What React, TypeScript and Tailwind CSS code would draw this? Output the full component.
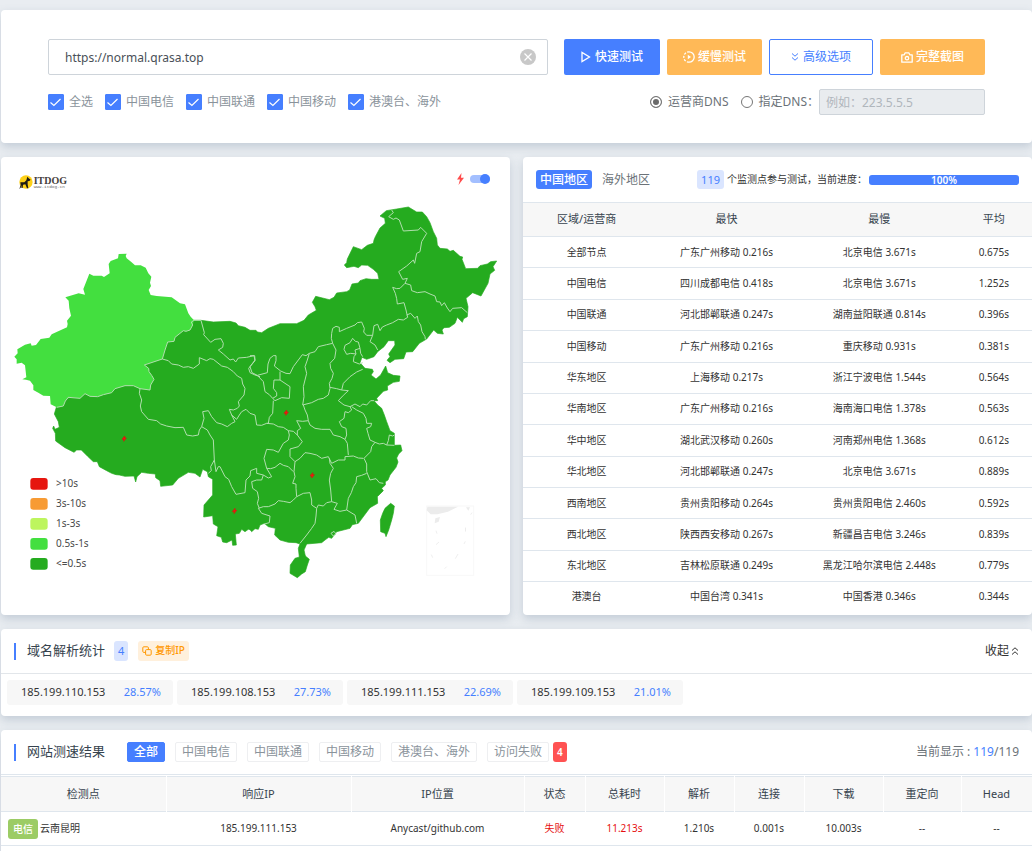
import { useState } from "react";
import clsx from "clsx";

const carriers = ["全选", "中国电信", "中国联通", "中国移动", "港澳台、海外"];

const regions = [
  { name: "全部节点", fast: "广东广州移动 0.216s", slow: "北京电信 3.671s", avg: "0.675s" },
  { name: "中国电信", fast: "四川成都电信 0.418s", slow: "北京电信 3.671s", avg: "1.252s" },
  { name: "中国联通", fast: "河北邯郸联通 0.247s", slow: "湖南益阳联通 0.814s", avg: "0.396s" },
  { name: "中国移动", fast: "广东广州移动 0.216s", slow: "重庆移动 0.931s", avg: "0.381s" },
  { name: "华东地区", fast: "上海移动 0.217s", slow: "浙江宁波电信 1.544s", avg: "0.564s" },
  { name: "华南地区", fast: "广东广州移动 0.216s", slow: "海南海口电信 1.378s", avg: "0.563s" },
  { name: "华中地区", fast: "湖北武汉移动 0.260s", slow: "河南郑州电信 1.368s", avg: "0.612s" },
  { name: "华北地区", fast: "河北邯郸联通 0.247s", slow: "北京电信 3.671s", avg: "0.889s" },
  { name: "西南地区", fast: "贵州贵阳移动 0.264s", slow: "贵州贵阳电信 2.460s", avg: "0.592s" },
  { name: "西北地区", fast: "陕西西安移动 0.267s", slow: "新疆昌吉电信 3.246s", avg: "0.839s" },
  { name: "东北地区", fast: "吉林松原联通 0.249s", slow: "黑龙江哈尔滨电信 2.448s", avg: "0.779s" },
  { name: "港澳台", fast: "中国台湾 0.341s", slow: "中国香港 0.346s", avg: "0.344s" },
];

const ips = [
  { ip: "185.199.110.153", rate: "28.57%" },
  { ip: "185.199.108.153", rate: "27.73%" },
  { ip: "185.199.111.153", rate: "22.69%" },
  { ip: "185.199.109.153", rate: "21.01%" },
];

const filters = ["全部", "中国电信", "中国联通", "中国移动", "港澳台、海外", "访问失败"];

const columns = [
  { label: "检测点", width: "w-[165px]" },
  { label: "响应IP", width: "w-[185px]" },
  { label: "IP位置", width: "w-[173px]" },
  { label: "状态", width: "w-[61px]" },
  { label: "总耗时", width: "w-[79px]" },
  { label: "解析", width: "w-[70px]" },
  { label: "连接", width: "w-[70px]" },
  { label: "下载", width: "w-[79px]" },
  { label: "重定向", width: "w-[78px]" },
  { label: "Head", width: "w-[71px]" },
];

const legend = [
  { label: ">10s", color: "#e6160f" },
  { label: "3s-10s", color: "#f79b34" },
  { label: "1s-3s", color: "#bdf55e" },
  { label: "0.5s-1s", color: "#43df3f" },
  { label: "<=0.5s", color: "#25ab1f" },
];

const mainland =
  "582,961 603,961 640,966 690,964 708,969 715,977 735,982 750,991 768,991 772,996 785,998 805,985 840,971 890,971 912,961 925,945 949,931 945,920 937,907 947,889 988,899 1002,892 1010,879 1040,875 1049,870 1056,852 1075,849 1080,842 1098,836 1115,838 1137,838 1133,820 1120,808 1103,796 1085,795 1075,803 1062,799 1040,803 1033,795 1040,788 1042,777 1060,740 1085,749 1102,736 1120,730 1122,720 1126,710 1140,684 1156,670 1154,655 1140,648 1159,632 1190,627 1225,621 1250,636 1267,636 1280,650 1290,668 1300,695 1310,715 1312,735 1320,745 1342,747 1350,754 1360,751 1380,769 1388,771 1386,778 1397,806 1433,805 1440,797 1462,792 1472,785 1490,783 1479,800 1484,811 1470,822 1464,850 1443,888 1418,878 1398,895 1404,920 1402,950 1391,956 1387,967 1372,952 1365,970 1348,982 1332,983 1326,990 1330,1002 1312,1000 1301,990 1280,1017 1258,1030 1238,1055 1218,1056 1211,1076 1185,1078 1170,1088 1161,1081 1170,1070 1166,1062 1185,1035 1184,1022 1165,1022 1152,1040 1133,1055 1122,1070 1100,1078 1086,1072 1080,1088 1095,1105 1117,1108 1120,1115 1113,1125 1128,1137 1142,1125 1157,1098 1163,1118 1180,1126 1200,1128 1198,1144 1180,1147 1162,1158 1163,1170 1150,1174 1130,1195 1133,1202 1122,1202 1133,1215 1145,1225 1153,1245 1160,1265 1170,1292 1183,1300 1183,1336 1202,1335 1206,1352 1196,1362 1190,1374 1194,1386 1188,1402 1170,1425 1164,1440 1156,1445 1156,1455 1145,1465 1150,1472 1132,1490 1133,1510 1110,1523 1075,1570 1057,1574 1050,1585 1010,1595 995,1615 986,1612 975,1620 965,1628 920,1632 912,1650 916,1668 912,1676 898,1672 895,1645 900,1632 888,1628 865,1627 840,1620 824,1605 826,1585 805,1580 793,1570 780,1575 775,1588 765,1586 755,1595 750,1589 745,1588 735,1595 725,1588 718,1600 706,1602 709,1635 698,1636 696,1620 680,1628 668,1626 664,1612 650,1607 654,1580 640,1572 638,1547 611,1551 612,1515 638,1485 638,1438 625,1430 622,1415 608,1408 600,1431 585,1420 565,1417 535,1435 518,1455 482,1459 480,1442 467,1433 466,1422 445,1420 425,1417 411,1430 407,1446 402,1428 375,1429 358,1425 348,1424 335,1420 320,1412 298,1400 292,1385 280,1385 262,1368 244,1350 230,1350 222,1357 195,1343 167,1323 166,1300 158,1285 161,1278 165,1288 178,1282 175,1265 163,1242 168,1225 170,1218 300,1130 430,1080 560,960";

const xinjiang =
  "582,961 572,950 565,940 555,913 540,910 515,892 470,888 452,885 446,870 453,858 450,848 454,830 445,820 437,803 422,796 405,796 393,785 380,775 377,768 380,761 356,762 354,775 332,783 326,792 329,820 312,831 305,827 280,827 268,821 250,867 255,884 236,880 196,892 206,902 208,925 213,947 201,962 203,972 201,982 155,1003 148,1013 122,1017 108,1035 95,1037 92,1030 75,1034 52,1048 53,1060 43,1070 50,1078 50,1091 65,1088 75,1096 79,1132 67,1138 78,1139 90,1142 100,1156 100,1170 115,1178 130,1187 150,1188 152,1213 170,1222 190,1218 196,1203 205,1192 240,1195 255,1181 270,1189 293,1190 310,1184 335,1178 345,1166 375,1157 400,1157 420,1166 450,1170 452,1155 462,1138 455,1126 447,1115 446,1105 433,1095 487,1077 495,1050 503,1026 522,1024 525,1012 550,992 558,994 570,990 578,975";

const hainan = "902,1670 916,1668 928,1678 922,1695 916,1715 905,1722 892,1733 870,1720 871,1695 885,1675";
const taiwan = "1172,1510 1183,1518 1180,1540 1175,1560 1166,1590 1158,1610 1155,1600 1142,1595 1141,1560 1148,1540 1155,1525";

const borders = [
  "170,1222 190,1218 196,1203 205,1192 240,1195 255,1181 270,1189 293,1190 310,1184 335,1178 345,1166 375,1157 400,1157 420,1166 450,1170 452,1155 462,1138 455,1126 447,1115 446,1105 433,1095 487,1077 495,1050 503,1026 522,1024 525,1012 550,992 558,994 570,990 578,975 574,966 582,961 603,961",
  "603,961 613,998 611,1004 632,1027 645,1018 663,1016 670,1030 668,1042 655,1050 670,1062 690,1080 700,1077 707,1086 715,1074 740,1072 762,1067 765,1082 746,1105 750,1118 765,1125 780,1130",
  "750,1067 764,1067 765,1080 750,1100 756,1118 772,1126 802,1118 804,1092 810,1075 820,1067 828,1067 828,1082 823,1098 842,1113 858,1120 870,1121 880,1100 907,1064 918,1067 928,1060 945,1055 955,1040 980,1034 998,1030 994,1015 995,1000 998,985 1008,979 1018,982 1018,995 1040,985 1065,975 1072,968 1085,966 1093,985 1091,996 1100,1006 1118,1006 1120,990 1122,977 1133,973 1140,992 1147,981 1160,975 1178,968 1195,958 1210,960 1223,952 1218,930 1212,908 1192,912 1190,896 1186,880 1178,862 1190,866 1200,865 1215,850 1222,835 1208,838 1196,815 1220,798 1240,780 1244,790 1250,760 1260,755 1265,725 1280,700 1262,682 1255,690 1210,693 1198,660 1188,654 1180,658 1166,650 1180,638 1175,630",
  "1215,850 1232,855 1235,872 1252,878 1275,875 1290,882 1305,888 1310,905 1320,906 1325,917 1333,908 1342,924 1350,935 1358,925 1385,923 1402,938",
  "1220,945 1232,940 1245,955 1252,948 1255,965 1262,975 1266,995 1275,1010 1276,1018",
  "1118,1006 1110,1025 1125,1035 1133,1050",
  "1058,1015 1066,1024 1075,1026 1080,1045 1065,1050 1068,1062 1052,1060 1040,1063 1032,1048 1035,1036 1050,1028 1058,1015",
  "1068,1062 1062,1070 1060,1085 1078,1092 1088,1088",
  "1080,1045 1082,1060 1088,1070",
  "928,1060 922,1080 915,1100 920,1120 910,1160 912,1190 908,1215",
  "998,1030 1008,1050 1004,1075 990,1090 992,1105 1000,1120 996,1135 988,1150 990,1165 985,1185 970,1195 955,1198 935,1208 908,1215",
  "990,1162 1010,1166 1025,1170 1030,1150 1050,1130 1070,1116 1088,1108",
  "1025,1170 1045,1172 1030,1186 1015,1202 1032,1215 1050,1220 1065,1212 1080,1220 1088,1212 1100,1215 1112,1202 1122,1202",
  "772,1126 790,1145 795,1175 808,1184 818,1195 830,1188 830,1178 820,1165 822,1140 840,1140 840,1115",
  "840,1140 870,1160 868,1195 845,1193 825,1202 818,1195",
  "820,1202 818,1240 808,1252 805,1270 800,1270",
  "800,1270 820,1272 835,1280 850,1282 865,1292 880,1294 892,1305 892,1292 902,1285 890,1262 908,1264 925,1262 922,1245 915,1230 910,1215",
  "487,1077 505,1082 515,1092 535,1095 550,1102 565,1100 580,1105 598,1092 598,1073 620,1082 630,1076 640,1078 665,1098 682,1102 700,1115 712,1128 725,1135 728,1152 735,1165 732,1185 715,1205 718,1218 712,1225 700,1230 688,1228 695,1245 710,1258 718,1245 725,1235 738,1228 750,1240 765,1245 770,1275 785,1276 800,1270",
  "695,1245 705,1265 695,1270 682,1280 665,1272 650,1268 635,1250 625,1232 608,1235 612,1255 605,1280",
  "420,1166 418,1180 425,1200 421,1218 425,1235 445,1258 470,1262 482,1272 500,1278 525,1283 550,1282 560,1305 578,1308 595,1305 598,1290 605,1280",
  "605,1280 622,1290 630,1305 640,1320 643,1380 648,1415 655,1400 660,1400 675,1430 686,1438 695,1460 708,1483 735,1478 738,1440 750,1428 752,1412 770,1405 770,1420 790,1425 785,1440 770,1440 755,1445 758,1465 772,1475 776,1495 772,1510 778,1525",
  "643,1380 632,1400 634,1412 625,1420",
  "790,1425 805,1434 815,1430 800,1405 812,1406 825,1402 840,1390 850,1396 865,1400 880,1415",
  "800,1405 792,1375 800,1348 820,1350 835,1357 850,1330 865,1320 868,1305 865,1292",
  "892,1305 907,1325 895,1340 870,1347 870,1370 885,1385 882,1415 885,1430 878,1450 888,1452 888,1465 890,1490",
  "890,1490 880,1500 870,1508 850,1504 835,1502 825,1512 805,1520 790,1520 775,1525 785,1540 810,1548 808,1568 793,1572",
  "890,1490 910,1480 930,1478 935,1500 935,1515 950,1525 948,1548 945,1570 935,1585 920,1605 900,1630",
  "950,1525 955,1515 970,1518 980,1508 995,1505 1012,1510 1002,1528 1020,1534 1040,1530 1065,1545 1070,1570",
  "995,1505 992,1470 988,1440 992,1420 1000,1405 990,1390 988,1375",
  "885,1385 900,1375 915,1358 930,1360 950,1365 965,1375 985,1370 995,1390 1015,1380 1035,1380 1035,1370 1060,1368 1075,1374 1090,1375",
  "925,1262 930,1275 945,1285 965,1288 990,1288 1000,1305 1020,1310 1035,1318 1042,1330 1045,1365",
  "1035,1318 1040,1305 1038,1285 1025,1280 1018,1265 1032,1255 1035,1235 1045,1238 1055,1230 1050,1220",
  "1055,1220 1070,1230 1090,1240 1098,1255 1100,1270 1115,1270 1112,1280 1100,1285 1104,1300 1110,1320 1125,1327",
  "1125,1327 1138,1332 1150,1330 1160,1335 1165,1322 1168,1305 1178,1308 1183,1305",
  "1160,1335 1183,1336",
  "1125,1327 1115,1340 1112,1355 1092,1375 1100,1392 1100,1415 1110,1440 1128,1436 1138,1448 1150,1450",
  "1100,1420 1085,1426 1070,1430 1068,1448 1060,1460 1054,1478 1045,1495 1040,1530",
  "993,1600 1002,1594 1008,1602 1000,1608 993,1600",
];

const faults = [
  { x: 373, y: 1316 },
  { x: 859, y: 1238 },
  { x: 937, y: 1426 },
  { x: 704, y: 1533 },
];

const card = "bg-white rounded shadow-[0_4px_10px_rgba(108,128,156,0.3)]";

function DoubleChevron({ up = false }: { up?: boolean }) {
  return (
    <svg viewBox="0 0 8 10" className={clsx("w-2 h-2.5", up && "rotate-180")} fill="none" stroke="currentColor">
      <path d="M1 1.5 4 4.2 7 1.5M1 5.5 4 8.2 7 5.5" />
    </svg>
  );
}

// Map units are a third of a pixel at the default width
function ChinaMap() {
  return (
    <svg viewBox="3 471 1527 1374" className="block w-full" role="img" aria-label="中国地区测速地图">
      <circle cx="78" cy="546" r="20" fill="#fdd017" />
      <path
        d="M82 530l4 5 6 4-4 4-5 1v9l2 12h-4l-5-12-7 1-1 10h-4l1-9-3 8-4 4 4-12-1-8h12l6-6z"
        fill="#1d1a14"
      />
      <text x="101" y="552" fontSize="30" fontWeight="700" fill="#45403c" className="font-['Liberation_Serif',serif]">
        ITDOG
      </text>
      <text x="101" y="564" fontSize="13" fill="#666" className="font-['Liberation_Mono',monospace]">
        www.itdog.cn
      </text>

      <g stroke="#25ab1f" strokeWidth="2" fill="#25ab1f" strokeLinejoin="round">
        <polygon points={mainland} />
        <polygon points={hainan} />
        <polygon points={taiwan} />
      </g>
      <polygon points={xinjiang} fill="#43df3f" />
      <g fill="none" stroke="#b0dfad" strokeWidth="3" strokeLinejoin="round">
        {borders.map((points) => (
          <polyline key={points} points={points} />
        ))}
      </g>

      {faults.map((f) => (
        <path key={f.x} d="M1-8-7 2h6l-1 6 8-10H1z" transform={`translate(${f.x} ${f.y})`} fill="#ff1010" stroke="#d8160c" strokeWidth="2" />
      ))}

      <rect x="1280" y="1518" width="141" height="208" fill="none" stroke="#f8f8f8" strokeWidth="3" />
      <g fill="#ececec">
        <path d="M1282 1520h92l-30 15-32 8h-20l-12-12z" />
        <path d="M1306 1555l14-4-4 14-12 5zM1398 1522h12l-5 10zM1395 1585l3-4v12l-3 3z" />
      </g>
      <path
        d="M1308 1592l3 9M1308 1634l9-8M1294 1664l4 9M1334 1706l6-6M1366 1676l8-14M1392 1632l4-8M1412 1544l4-6"
        stroke="#efefef"
        strokeWidth="3"
      />

      {legend.map((item, i) => (
        <g key={item.label}>
          <rect x="91" y={1434 + i * 60} width="52" height="35" rx="9" fill={item.color} />
          <text x="168" y={1460 + i * 60} fontSize="30" fill="#4a4a4a">
            {item.label}
          </text>
        </g>
      ))}
    </svg>
  );
}

export default function App() {
  const [url, setUrl] = useState("https://normal.qrasa.top");
  const [checked, setChecked] = useState(carriers);
  const [dns, setDns] = useState("isp");
  const [filter, setFilter] = useState("全部");

  const toggle = (name: string) => {
    setChecked(checked.includes(name) ? checked.filter((c) => c !== name) : [...checked, name]);
  };

  return (
    <div className="min-h-screen overflow-hidden bg-[#e9edf1] pl-px pt-2.5 flex flex-col gap-3.5 text-xs text-[#333] font-['Noto_Sans','Noto_Sans_CJK_SC',sans-serif]">
      <section className={clsx(card, "px-[47px] pt-[29px] pb-7")}>
        <div className="flex">
          <div className="relative flex-1">
            <input
              aria-label="网址"
              value={url}
              onChange={(e) => setUrl(e.target.value)}
              className="w-full h-9 border border-[#ced4da] rounded-xs px-4 text-xs text-[#495057] outline-none"
            />
            <button aria-label="清空" onClick={() => setUrl("")} className="absolute right-3 top-2.5">
              <svg viewBox="0 0 16 16" className="size-4">
                <circle cx="8" cy="8" r="8" fill="#c8c8c8" />
                <path d="M4.5 4.5l7 7M11.5 4.5l-7 7" stroke="#fff" strokeWidth="1.2" />
              </svg>
            </button>
          </div>
          <div className="flex gap-[7px] ml-4 text-xs font-medium">
            <button className="w-24 h-9 rounded-xs bg-[#467fff] text-white flex items-center justify-center gap-1">
              <svg viewBox="0 0 10 12" className="w-2.5 h-3" fill="none" stroke="currentColor" strokeWidth="1.3">
                <path d="M1 1.5v9L8.5 6z" />
              </svg>
              快速测试
            </button>
            <button className="w-[95px] h-9 rounded-xs bg-[#ffb957] text-white flex items-center justify-center gap-[3px]">
              <svg viewBox="0 0 12 12" className="size-3" fill="none" stroke="currentColor" strokeWidth="1.3">
                <path d="M6 .8a5.2 5.2 0 010 10.4" />
                <path d="M6 11.2A5.2 5.2 0 016 .8" strokeDasharray="2.2 1.3" />
                <path d="M4.8 3.8v4.4L8 6z" fill="currentColor" stroke="none" />
              </svg>
              缓慢测试
            </button>
            <button className="w-[104px] h-9 rounded-xs border border-[#467fff] text-[#467fff] font-normal flex items-center justify-center gap-1">
              <DoubleChevron />
              高级选项
            </button>
            <button className="w-[105px] h-9 rounded-xs bg-[#ffb957] text-white flex items-center justify-center gap-[3px]">
              <svg viewBox="0 0 12 11" className="w-3 h-[11px]" fill="none" stroke="currentColor" strokeWidth="1.3">
                <path d="M.8 2.8h2.4l1-2h3.6l1 2h2.4v7.4H.8z" strokeLinejoin="round" />
                <circle cx="6" cy="6.2" r="1.7" />
              </svg>
              完整截图
            </button>
          </div>
        </div>
        <div className="flex justify-between items-center mt-3.5 h-[26px]">
          <div className="flex gap-3 text-[#8a939b]">
            {carriers.map((name) => (
              <label key={name} className="flex items-center gap-[5px]">
                <span className="relative flex">
                  <input
                    type="checkbox"
                    checked={checked.includes(name)}
                    onChange={() => toggle(name)}
                    className="peer appearance-none size-4 rounded-[1px] border border-[#467fff] checked:bg-[#467fff]"
                  />
                  <svg viewBox="0 0 16 16" className="absolute inset-0 size-4 pointer-events-none hidden peer-checked:block" fill="none" stroke="#fff" strokeWidth="1.2">
                    <path d="M2.5 8.5l3.4 3L12.5 5" />
                  </svg>
                </span>
                {name}
              </label>
            ))}
          </div>
          <div className="flex items-center text-[#6b7278]">
            <label className="flex items-center gap-1.5 mr-3">
              <input
                type="radio"
                name="dns"
                checked={dns === "isp"}
                onChange={() => setDns("isp")}
                className="appearance-none size-3 rounded-full border border-[#767676] checked:bg-[#6a6a6a] checked:shadow-[inset_0_0_0_2px_#fff]"
              />
              运营商DNS
            </label>
            <label className="flex items-center gap-1.5">
              <input
                type="radio"
                name="dns"
                checked={dns === "custom"}
                onChange={() => setDns("custom")}
                className="appearance-none size-3 rounded-full border border-[#767676] checked:bg-[#6a6a6a] checked:shadow-[inset_0_0_0_2px_#fff]"
              />
              指定DNS：
            </label>
            <input
              aria-label="DNS 服务器"
              disabled={dns !== "custom"}
              placeholder="例如：223.5.5.5"
              className="w-[166px] h-[26px] rounded-xs border border-[#ced4da] bg-[#e9ecef] px-1.5 text-xs placeholder:text-[#b0b6bc]"
            />
          </div>
        </div>
      </section>

      <div className="grid grid-cols-2 gap-[13px]">
        <section className={clsx(card, "relative")}>
          <ChinaMap />
          <label className="absolute right-5 top-4 flex items-center gap-1.5">
            <svg viewBox="0 0 7 12" className="w-[7px] h-3" fill="#ff4c4c">
              <path d="M4.5 0 0 6.5h3L1.5 12 7 4.8H4z" />
            </svg>
            <span className="relative flex items-center w-5 h-3">
              <input type="checkbox" defaultChecked aria-label="故障标记" className="appearance-none w-5 h-2 rounded-full bg-[#a3bfff]" />
              <span className="absolute right-0 size-2.5 rounded-full bg-[#467fff] pointer-events-none" />
            </span>
          </label>
        </section>

        <section className={clsx(card, "overflow-hidden flex flex-col")}>
          <div className="flex items-center h-[45px] px-[13px]">
            <button className="h-[19px] px-1 rounded-[3px] bg-[#467fff] text-white font-medium leading-[18px]">中国地区</button>
            <button className="ml-2.5 text-[#6b7278] leading-[18px]">海外地区</button>
            <span className="ml-auto h-[19px] px-1 rounded-[3px] bg-[#dae5ff] text-[#467fff] text-[11px] leading-[19px]">119</span>
            <span className="ml-[3px] mr-0.5 text-[10px]">个监测点参与测试，当前进度：</span>
            <div className="w-[150px] h-2.5 rounded-[3px] bg-[#467fff] text-white text-[10px] font-semibold leading-[10px] text-center">
              100%
            </div>
          </div>
          <table className="w-full h-[410px] table-fixed text-center text-[10px]">
            <thead>
              <tr className="h-[34px] bg-[#f7f7f7] border-y border-[#dfe6ed] text-[11px] text-[#36434e]">
                <th className="w-[25%] font-normal">区域/运营商</th>
                <th className="w-[30%] font-normal">最快</th>
                <th className="w-[30%] font-normal">最慢</th>
                <th className="w-[15%] font-normal">平均</th>
              </tr>
            </thead>
            <tbody>
              {regions.map((r) => (
                <tr key={r.name} className="border-b border-[#dfe6ed] last:border-b-0">
                  <td>{r.name}</td>
                  <td>{r.fast}</td>
                  <td>{r.slow}</td>
                  <td>{r.avg}</td>
                </tr>
              ))}
            </tbody>
          </table>
        </section>
      </div>

      <section className={card}>
        <div className="flex items-center h-[45px] px-[13px] border-b border-[#e2e6ea]">
          <span className="w-0.5 h-[17px] bg-[#467fff]" />
          <h2 className="ml-[11px] text-[13px] text-[#36434e]">域名解析统计</h2>
          <span className="ml-[9px] h-5 px-1 rounded-[3px] bg-[#dae5ff] text-[#467fff] text-[11px] leading-5">4</span>
          <button className="ml-2.5 h-5 px-1 rounded-[3px] bg-[#fff0dc] text-[#ff9800] text-[10px] font-medium flex items-center gap-[3px]">
            <svg viewBox="0 0 10 10" className="size-2.5" fill="none" stroke="currentColor">
              <rect x=".8" y=".8" width="5.6" height="5.6" rx="1" />
              <rect x="3.6" y="3.6" width="5.6" height="5.6" rx="1" fill="#fff0dc" />
            </svg>
            复制IP
          </button>
          <button className="ml-auto flex items-center gap-0.5">
            收起
            <DoubleChevron up />
          </button>
        </div>
        <div className="flex flex-wrap gap-1 px-1.5 pt-1.5 pb-[11px] text-[11px]">
          {ips.map((item) => (
            <div key={item.ip} className="flex justify-between w-[166px] h-[25px] pl-3.5 pr-3 rounded-[3px] bg-[#f7f7f7] leading-6">
              <span>{item.ip}</span>
              <span className="text-[#467fff]">{item.rate}</span>
            </div>
          ))}
        </div>
      </section>

      <section className={clsx(card, "pb-6")}>
        <div className="flex items-center h-[45px] px-[13px] border-b border-[#dfe6ed]">
          <span className="w-0.5 h-[17px] bg-[#467fff]" />
          <h2 className="ml-[11px] mr-[22px] text-[13px] text-[#36434e]">网站测速结果</h2>
          <div className="flex gap-2.5">
            {filters.map((name) => (
              <button
                key={name}
                onClick={() => setFilter(name)}
                className={clsx(
                  "h-5 px-1.5 rounded-xs border leading-[18px]",
                  filter === name ? "bg-[#467fff] border-[#467fff] text-white font-medium" : "border-[#eeeff1] text-[#8a939b]"
                )}
              >
                {name}
              </button>
            ))}
          </div>
          <span className="ml-1 h-5 px-1 rounded-[3px] bg-[#ff5252] text-white text-[10px] font-semibold leading-5">4</span>
          <span className="ml-auto text-[#6b7278]">
            当前显示 : <span className="text-[#467fff]">119</span>/119
          </span>
        </div>
        <table className="w-full mt-px table-fixed text-center text-[10px]">
          <thead>
            <tr className="h-[35px] border-y border-[#dfe6ed] text-[11px] text-[#36434e]">
              {columns.map((c) => (
                <th key={c.label} className={clsx(c.width, "font-normal bg-[#f7f7f7] border-r border-r-white")}>
                  {c.label}
                </th>
              ))}
            </tr>
          </thead>
          <tbody>
            <tr className="h-[34px] border-b border-[#dfe6ed]">
              <td>
                <div className="flex items-center gap-0.5 pl-[7px]">
                  <span className="h-5 px-[5px] rounded-[3px] bg-[#9ccc65] text-white font-medium leading-5">电信</span>
                  云南昆明
                </div>
              </td>
              <td>185.199.111.153</td>
              <td>Anycast/github.com</td>
              <td className="text-[#e61010]">失败</td>
              <td className="text-[#e61010]">11.213s</td>
              <td>1.210s</td>
              <td>0.001s</td>
              <td>10.003s</td>
              <td>--</td>
              <td>--</td>
            </tr>
          </tbody>
        </table>
      </section>
    </div>
  );
}
